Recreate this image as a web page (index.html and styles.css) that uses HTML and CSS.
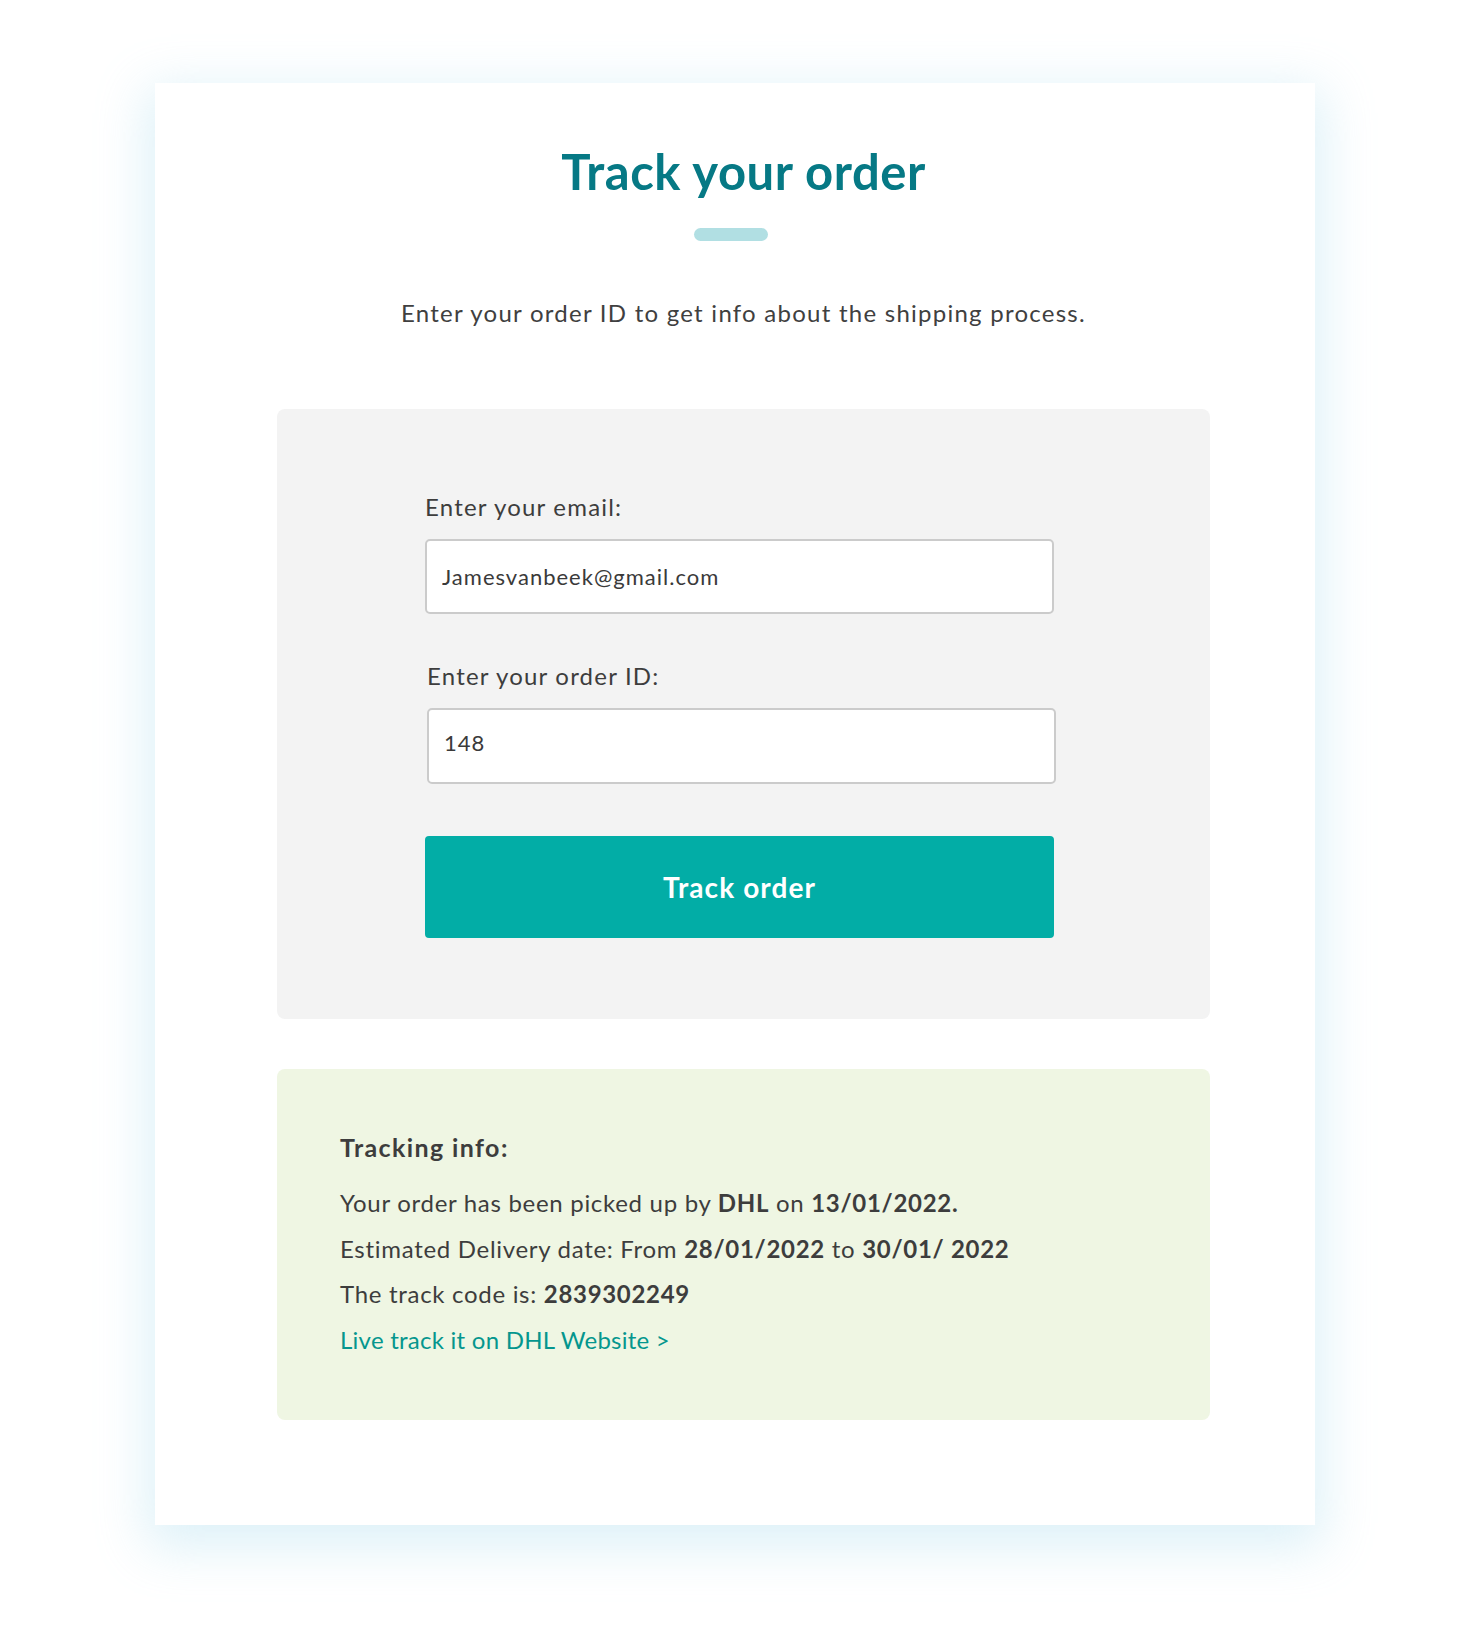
FILE: index.html
```html
<!DOCTYPE html>
<html lang="en">
<head>
<meta charset="utf-8">
<title>Track your order</title>
<link rel="stylesheet" href="styles.css">
</head>
<body>
<div class="page">
  <main class="card">
    <h1 class="title">Track your order</h1>
    <div class="title-bar"></div>
    <p class="subtitle">Enter your order ID to get info about the shipping process.</p>

    <form class="form-box">
      <label class="field-label" for="email">Enter your email:</label>
      <input class="field-input" id="email" type="text" value="Jamesvanbeek@gmail.com">
      <label class="field-label field-label--second" for="order">Enter your order ID:</label>
      <input class="field-input field-input--second" id="order" type="text" value="148">
      <button class="track-btn" type="button">Track order</button>
    </form>

    <section class="info-box">
      <h2 class="info-title">Tracking info:</h2>
      <p class="info-line">Your order has been picked up by <b>DHL</b> on <b>13/01/2022.</b></p>
      <p class="info-line">Estimated Delivery date: From <b>28/01/2022</b> to <b>30/01/ 2022</b></p>
      <p class="info-line">The track code is: <b>2839302249</b></p>
      <p class="info-line"><a class="info-link" href="#">Live track it on DHL Website &gt;</a></p>
    </section>
  </main>
</div>
</body>
</html>
```

FILE: styles.css
```css
* {
  box-sizing: border-box;
}

html, body {
  margin: 0;
  padding: 0;
  background: #ffffff;
}

body {
  font-family: "Lato", "Liberation Sans", sans-serif;
  color: #3d3d3d;
}

.page {
  width: 1473px;
  padding-top: 83px;
  padding-bottom: 123px;
}

.card {
  margin-left: 155px;
  width: 1160px;
  background: #ffffff;
  padding: 59px 105px 105px 122px;
  display: flex;
  flex-direction: column;
  box-shadow: 0 14px 48px 8px rgba(150, 210, 232, 0.32);
}

.title {
  margin: 0;
  font-size: 49px;
  line-height: 58px;
  font-weight: 700;
  letter-spacing: 0.55px;
  color: #067985;
  text-align: center;
}

.title-bar {
  margin-top: 28px;
  margin-left: 417px;
  width: 74px;
  height: 13px;
  border-radius: 7px;
  background: #b1dfe3;
}

.subtitle {
  margin: 56px 0 0;
  font-size: 24px;
  line-height: 32px;
  letter-spacing: 1.25px;
  text-align: center;
  color: #404040;
}

.form-box {
  margin: 80px 0 0;
  background: #f3f3f3;
  border-radius: 8px;
  padding: 83px 156px 81px 148px;
  display: flex;
  flex-direction: column;
}

.field-label {
  display: block;
  font-size: 24px;
  line-height: 30px;
  letter-spacing: 1.2px;
  color: #3d3d3d;
}

.field-label--second {
  margin-top: 47px;
  margin-left: 2px;
}

.field-input {
  margin-top: 17px;
  height: 75px;
  width: 100%;
  border: 2px solid #cbcbcb;
  border-radius: 5px;
  background: #ffffff;
  padding: 0 15px;
  font-family: "Lato", "Liberation Sans", sans-serif;
  font-size: 22px;
  letter-spacing: 1px;
  color: #3a3a3a;
  outline: none;
}

.field-input--second {
  margin-left: 2px;
  height: 76px;
  padding-bottom: 7px;
}

.track-btn {
  margin-top: 52px;
  height: 102px;
  width: 100%;
  border: none;
  border-radius: 4px;
  background: #02ada6;
  color: #ffffff;
  font-family: "Lato", "Liberation Sans", sans-serif;
  font-size: 28px;
  font-weight: 700;
  letter-spacing: 1.1px;
  cursor: pointer;
}

.info-box {
  margin-top: 50px;
  background: #eff6e3;
  border-radius: 8px;
  padding: 62px 40px 58px 63px;
}

.info-title {
  margin: 0 0 17px;
  font-size: 25px;
  line-height: 32px;
  font-weight: 700;
  letter-spacing: 1.4px;
  color: #3d3d3d;
}

.info-line {
  margin: 0;
  font-size: 24px;
  line-height: 45.5px;
  letter-spacing: 0.7px;
  color: #3d3d3d;
}

.info-line b {
  font-weight: 700;
}

.info-link {
  color: #05968e;
  letter-spacing: 0.25px;
  text-decoration: none;
}
```
